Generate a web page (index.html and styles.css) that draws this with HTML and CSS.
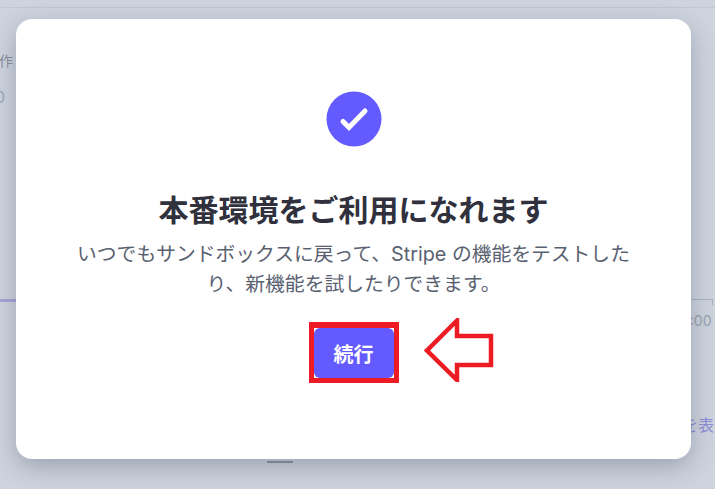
FILE: index.html
```html
<!DOCTYPE html>
<html lang="ja">
<head>
<meta charset="utf-8">
<title>本番環境をご利用になれます</title>
<link rel="stylesheet" href="styles.css">
</head>
<body>
<div class="backdrop">
  <div class="bg-topline"></div>
  <span class="bg-text bg-saku">作</span>
  <span class="bg-text bg-zero">0</span>
  <div class="bg-purple"></div>
  <div class="bg-bracket"></div>
  <span class="bg-text bg-time">0:00</span>
  <span class="bg-text bg-link">を表</span>
  <div class="bg-dash"></div>
  <main class="modal">
    <svg class="check" viewBox="0 0 56 56" aria-hidden="true">
      <circle cx="28" cy="28" r="27.5" fill="#635bff"/>
      <path d="M17 30.5 L23 36.5 L39 20" fill="none" stroke="#fff" stroke-width="5" stroke-linecap="round" stroke-linejoin="miter"/>
    </svg>
    <h1 class="title">本番環境をご利用になれます</h1>
    <p class="desc">いつでもサンドボックスに戻って、Stripe の機能をテストしたり、新機能を試したりできます。</p>
    <div class="action">
      <button class="btn">続行</button>
    </div>
  </main>
  <svg class="arrow" viewBox="0 0 72 64" aria-hidden="true">
    <path d="M33 2.5 L3 32.5 L33 62 L33 47 L67 47 L67 18 L33 18 Z" fill="#fff" stroke="#ed1c24" stroke-width="4.5" stroke-linejoin="miter"/>
  </svg>
</div>
</body>
</html>
```
FILE: styles.css
```css
html, body {
  margin: 0;
  padding: 0;
  width: 715px;
  height: 489px;
  overflow: hidden;
}
body {
  font-family: "Inter", "Noto Sans CJK JP", "Liberation Sans", sans-serif;
}
.backdrop {
  position: relative;
  width: 715px;
  height: 489px;
  background: #ced4de;
  overflow: hidden;
}
.bg-topline {
  position: absolute;
  left: 0;
  right: 0;
  top: 7px;
  height: 1px;
  background: #c2c8d2;
}
.bg-text {
  position: absolute;
  font-size: 14px;
  line-height: 20px;
  color: #8a919e;
  white-space: nowrap;
}
.bg-saku { left: -1px; top: 51px; }
.bg-zero { left: -5px; top: 87px; color: #9aa4b8; font-size: 16px; }
.bg-purple {
  position: absolute;
  left: 0;
  top: 299px;
  width: 16px;
  height: 3px;
  background: #a9a3d6;
}
.bg-bracket {
  position: absolute;
  left: 691px;
  top: 299px;
  width: 22px;
  height: 6px;
  border-top: 1px solid #aab1bd;
  border-right: 1px solid #aab1bd;
  box-sizing: border-box;
}
.bg-time { left: 681px; top: 311px; color: #9aa1ae; }
.bg-link { left: 682px; top: 414px; font-size: 16px; line-height: 22px; color: #8f8bd8; }
.bg-dash {
  position: absolute;
  left: 267px;
  top: 461px;
  width: 26px;
  height: 2px;
  background: #8d96a6;
}
.modal {
  position: absolute;
  left: 16px;
  top: 19px;
  width: 675px;
  height: 440px;
  box-sizing: border-box;
  padding-top: 72px;
  background: #fff;
  border-radius: 16px;
  box-shadow: 0 8px 24px rgba(50, 60, 80, 0.32);
  display: flex;
  flex-direction: column;
  align-items: center;
}
.check {
  width: 56px;
  height: 56px;
  display: block;
}
.title {
  margin: 43px 0 0;
  font-size: 30px;
  line-height: 40px;
  font-weight: 700;
  color: #30313d;
  text-align: center;
}
.desc {
  margin: 9px 0 0;
  width: 556px;
  font-size: 19.8px;
  line-height: 30px;
  color: #596171;
  text-align: center;
}
.action {
  margin-top: 23px;
  display: flex;
  justify-content: center;
  border: 5px solid #ed1c24;
  border-top-width: 6px;
  width: 80px;
  height: 50px;
  box-sizing: content-box;
}
.btn {
  width: 80px;
  height: 50px;
  border: 0;
  border-radius: 6px;
  background: #635bff;
  color: #fff;
  font: inherit;
  font-size: 20px;
  font-weight: 700;
  padding: 0;
}
.arrow {
  position: absolute;
  left: 424px;
  top: 318px;
  width: 72px;
  height: 64px;
}
```
